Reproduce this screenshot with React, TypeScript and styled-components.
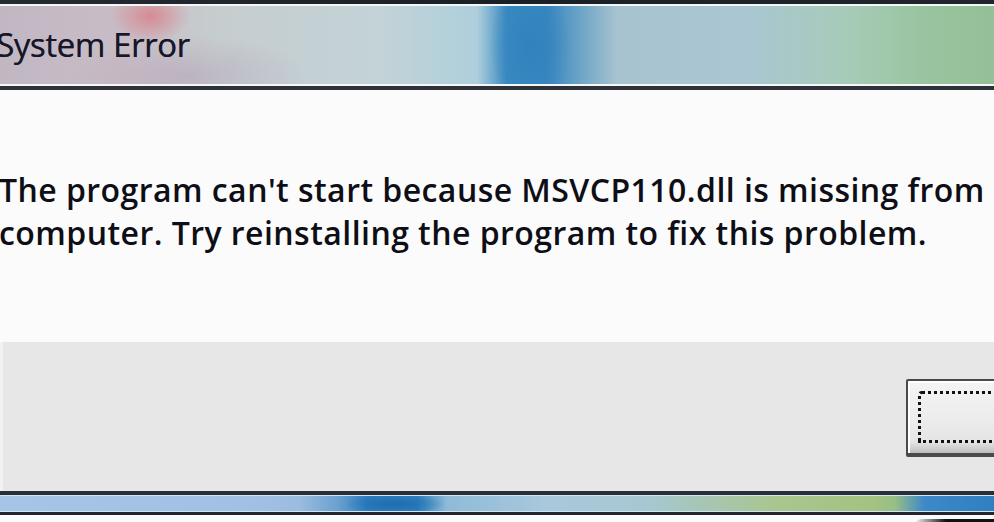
import React from "react";
import styled, { createGlobalStyle } from "styled-components";

const Global = createGlobalStyle`
  html, body { margin: 0; padding: 0; background: #fbfbfb; }
  body { width: 994px; height: 522px; overflow: hidden; }
  #root { width: 994px; height: 522px; }
`;

const Frame = styled.div`
  width: 994px;
  height: 522px;
  display: flex;
  flex-direction: column;
  overflow: hidden;
  background: #fbfbfb;
  font-family: "Open Sans", "DejaVu Sans", sans-serif;
`;

const TopEdge = styled.div`
  height: 4px;
  background: linear-gradient(90deg, #262b33 0%, #1b2027 50%, #20262c 100%);
  border-bottom: 2px solid #f2f6f7;
  flex: none;
`;

const TitleBar = styled.div`
  height: 78px;
  flex: none;
  display: flex;
  align-items: center;
  background:
    radial-gradient(ellipse 40px 28px at 150px 10px, rgba(220, 120, 130, 0.75), rgba(220, 120, 130, 0) 100%),
    radial-gradient(ellipse 120px 40px at 190px 70px, rgba(170, 140, 170, 0.35), rgba(170, 140, 170, 0) 100%),
    radial-gradient(ellipse 40px 70px at 530px 40px, rgba(50, 130, 190, 1), rgba(50, 130, 190, 0) 100%),
    linear-gradient(90deg, #c1b7c3 0%, #c8bdc6 12%, #c6cdcf 22%, #c3d3d7 38%, #aecfdc 48%, #3a8ac1 51%, #3887c0 55%, #a6c3cf 62%, #a9c6d2 75%, #a7cbb9 85%, #99c49f 93%, #95bf97 100%);
`;

const TitleText = styled.div`
  margin-left: -4px;
  margin-top: -2px;
  font-size: 33px;
  color: #161628;
  letter-spacing: -0.4px;
  text-shadow: 0.4px 0 0 rgba(22, 22, 40, 0.8);
`;

const Separator = styled.div`
  height: 2px;
  flex: none;
  background: #f4f8f9;
  border-bottom: 4px solid #2e3238;
`;

const Content = styled.div`
  height: 252px;
  flex: none;
  padding: 78px 0 0 0;
  box-sizing: border-box;
  background: #fbfbfb;
`;

const Message = styled.p`
  margin: 0;
  margin-left: -1px;
  font-size: 32px;
  font-weight: 600;
  line-height: 43px;
  color: #0e0e16;
  white-space: nowrap;
  letter-spacing: 0.45px;
`;

const Footer = styled.div`
  height: 149px;
  flex: none;
  box-sizing: border-box;
  background: #e8e7e7;
  border-left: 3px solid #f2f2f2;
  display: flex;
  justify-content: flex-end;
  padding-top: 37px;
`;

const Button = styled.button`
  width: 100px;
  height: 78px;
  margin-right: -12px;
  box-sizing: border-box;
  border: 2px solid #4a4a4a;
  border-bottom-width: 4px;
  border-radius: 2px;
  background: linear-gradient(180deg, #f4f4f4 0%, #ececec 55%, #e4e4e4 85%, #bdbdbd 100%);
  box-shadow: inset 2px 2px 0 #ffffff;
  padding: 10px 0 0 10px;
  display: flex;
  align-items: flex-start;
  justify-content: flex-start;
`;

const Focus = styled.span`
  display: block;
  width: 90px;
  height: 52px;
  box-sizing: border-box;
  border: 3px dotted #111;
  border-radius: 4px 0 0 0;
`;

const BottomEdge = styled.div`
  height: 4px;
  flex: none;
  background: #2a2f36;
`;

const BottomBand = styled.div`
  height: 15px;
  flex: none;
  background:
    radial-gradient(ellipse 50px 10px at 395px 8px, rgba(30, 110, 175, 1), rgba(30, 110, 175, 0) 100%),
    linear-gradient(90deg, #a5c4e6 0%, #a2c0e3 25%, #9cbde0 30%, #6ba0cf 34%, #2d7dbf 37%, #2f80c0 42%, #8fbbd8 45%, #a9c8dc 55%, #a7c8d2 65%, #a6c6b8 70%, #a9c690 78%, #a4c280 88%, #98bf86 90%, #3d88c8 93%, #2f7fc2 100%);
  border-top: 1px solid #cfe3f3;
  border-bottom: 1px solid #cfe6f2;
`;

const BottomDark = styled.div`
  height: 3px;
  flex: none;
  background: #22272d;
`;

const BottomRest = styled.div`
  flex: 1;
  position: relative;
  background: #fbfbfb;
`;

const Shadow = styled.div`
  position: absolute;
  right: 0;
  top: 4px;
  width: 80px;
  height: 8px;
  background: linear-gradient(90deg, rgba(0, 0, 0, 0) 0%, #111 40%, #111 100%);
  border-radius: 40px 0 0 0;
`;

export default function App() {
  return (
    <>
      <Global />
      <Frame>
        <TopEdge />
        <TitleBar>
          <TitleText>System Error</TitleText>
        </TitleBar>
        <Separator />
        <Content>
          <Message>
            The program can't start because MSVCP110.dll is missing from
            <br />
            computer. Try reinstalling the program to fix this problem.
          </Message>
        </Content>
        <Footer>
          <Button type="button" aria-label="OK">
            <Focus />
          </Button>
        </Footer>
        <BottomEdge />
        <BottomBand />
        <BottomDark />
        <BottomRest>
          <Shadow />
        </BottomRest>
      </Frame>
    </>
  );
}
